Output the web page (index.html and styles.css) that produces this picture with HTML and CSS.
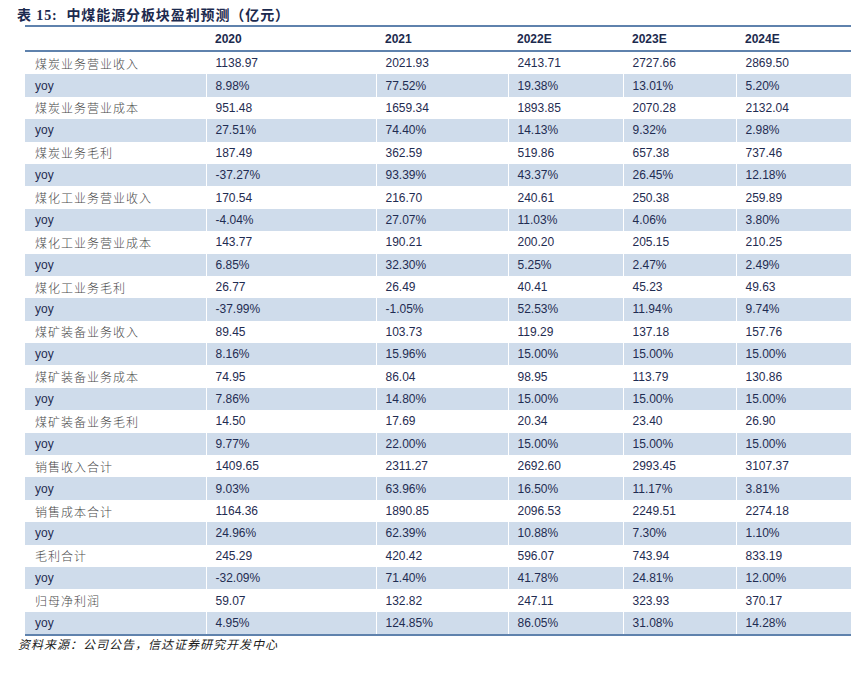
FILE: index.html
```html
<!DOCTYPE html>
<html lang="zh">
<head>
<meta charset="utf-8">
<link rel="stylesheet" href="styles.css">
</head>
<body>
<div class="title">表 15:&nbsp; 中煤能源分板块盈利预测（亿元）</div>
<table class="tbl">
<colgroup>
<col class="c0"><col class="c1"><col class="c2"><col class="c3"><col class="c4"><col class="c5">
</colgroup>
<thead>
<tr><th></th><th>2020</th><th>2021</th><th>2022E</th><th>2023E</th><th>2024E</th></tr>
</thead>
<tbody>
<tr><td class="lab">煤炭业务营业收入</td><td>1138.97</td><td>2021.93</td><td>2413.71</td><td>2727.66</td><td>2869.50</td></tr>
<tr class="alt"><td>yoy</td><td>8.98%</td><td>77.52%</td><td>19.38%</td><td>13.01%</td><td>5.20%</td></tr>
<tr><td class="lab">煤炭业务营业成本</td><td>951.48</td><td>1659.34</td><td>1893.85</td><td>2070.28</td><td>2132.04</td></tr>
<tr class="alt"><td>yoy</td><td>27.51%</td><td>74.40%</td><td>14.13%</td><td>9.32%</td><td>2.98%</td></tr>
<tr><td class="lab">煤炭业务毛利</td><td>187.49</td><td>362.59</td><td>519.86</td><td>657.38</td><td>737.46</td></tr>
<tr class="alt"><td>yoy</td><td>-37.27%</td><td>93.39%</td><td>43.37%</td><td>26.45%</td><td>12.18%</td></tr>
<tr><td class="lab">煤化工业务营业收入</td><td>170.54</td><td>216.70</td><td>240.61</td><td>250.38</td><td>259.89</td></tr>
<tr class="alt"><td>yoy</td><td>-4.04%</td><td>27.07%</td><td>11.03%</td><td>4.06%</td><td>3.80%</td></tr>
<tr><td class="lab">煤化工业务营业成本</td><td>143.77</td><td>190.21</td><td>200.20</td><td>205.15</td><td>210.25</td></tr>
<tr class="alt"><td>yoy</td><td>6.85%</td><td>32.30%</td><td>5.25%</td><td>2.47%</td><td>2.49%</td></tr>
<tr><td class="lab">煤化工业务毛利</td><td>26.77</td><td>26.49</td><td>40.41</td><td>45.23</td><td>49.63</td></tr>
<tr class="alt"><td>yoy</td><td>-37.99%</td><td>-1.05%</td><td>52.53%</td><td>11.94%</td><td>9.74%</td></tr>
<tr><td class="lab">煤矿装备业务收入</td><td>89.45</td><td>103.73</td><td>119.29</td><td>137.18</td><td>157.76</td></tr>
<tr class="alt"><td>yoy</td><td>8.16%</td><td>15.96%</td><td>15.00%</td><td>15.00%</td><td>15.00%</td></tr>
<tr><td class="lab">煤矿装备业务成本</td><td>74.95</td><td>86.04</td><td>98.95</td><td>113.79</td><td>130.86</td></tr>
<tr class="alt"><td>yoy</td><td>7.86%</td><td>14.80%</td><td>15.00%</td><td>15.00%</td><td>15.00%</td></tr>
<tr><td class="lab">煤矿装备业务毛利</td><td>14.50</td><td>17.69</td><td>20.34</td><td>23.40</td><td>26.90</td></tr>
<tr class="alt"><td>yoy</td><td>9.77%</td><td>22.00%</td><td>15.00%</td><td>15.00%</td><td>15.00%</td></tr>
<tr><td class="lab">销售收入合计</td><td>1409.65</td><td>2311.27</td><td>2692.60</td><td>2993.45</td><td>3107.37</td></tr>
<tr class="alt"><td>yoy</td><td>9.03%</td><td>63.96%</td><td>16.50%</td><td>11.17%</td><td>3.81%</td></tr>
<tr><td class="lab">销售成本合计</td><td>1164.36</td><td>1890.85</td><td>2096.53</td><td>2249.51</td><td>2274.18</td></tr>
<tr class="alt"><td>yoy</td><td>24.96%</td><td>62.39%</td><td>10.88%</td><td>7.30%</td><td>1.10%</td></tr>
<tr><td class="lab">毛利合计</td><td>245.29</td><td>420.42</td><td>596.07</td><td>743.94</td><td>833.19</td></tr>
<tr class="alt"><td>yoy</td><td>-32.09%</td><td>71.40%</td><td>41.78%</td><td>24.81%</td><td>12.00%</td></tr>
<tr><td class="lab">归母净利润</td><td>59.07</td><td>132.82</td><td>247.11</td><td>323.93</td><td>370.17</td></tr>
<tr class="alt last"><td>yoy</td><td>4.95%</td><td>124.85%</td><td>86.05%</td><td>31.08%</td><td>14.28%</td></tr>
</tbody>
</table>
<div class="source">资料来源：公司公告，信达证券研究开发中心</div>
</body>
</html>
```
FILE: styles.css
```css
html, body {
  margin: 0;
  padding: 0;
  background: #ffffff;
}
body {
  width: 859px;
  height: 673px;
  font-family: "Liberation Sans", Arial, "Noto Sans CJK SC", sans-serif;
}
.title {
  height: 25px;
  line-height: 31px;
  padding-left: 17px;
  font-family: "Liberation Serif", "Noto Sans CJK SC", serif;
  font-weight: bold;
  font-size: 14px;
  letter-spacing: 0.9px;
  color: #1c2a4e;
  white-space: nowrap;
}
.tbl {
  margin-left: 25px;
  width: 826px;
  border-collapse: collapse;
  table-layout: fixed;
  border-top: 2px solid #5f82ad;
}
.c0 { width: 181px; }
.c1 { width: 170px; }
.c2 { width: 132px; }
.c3 { width: 115px; }
.c4 { width: 113px; }
.c5 { width: 115px; }
.tbl th {
  height: 22px;
  padding: 1px 0 0 9px;
  text-align: left;
  font-size: 12px;
  font-weight: bold;
  color: #1c2a4e;
  border-bottom: 2px solid #5f82ad;
}
.tbl td {
  height: 22.4px;
  padding: 0 0 0 9px;
  font-size: 12px;
  color: #1f2c52;
  white-space: nowrap;
  border-left: 1px solid #ffffff;
}
.tbl td:first-child {
  padding-left: 10px;
  border-left: none;
}
.tbl td.lab {
  font-family: "Noto Sans CJK SC", sans-serif;
  font-size: 12px;
  letter-spacing: 1px;
  color: #4a4a4a;
  font-weight: 300;
}
.tbl tr.alt td {
  background: #cfdceb;
}
.tbl tr.last td {
  border-bottom: 2px solid #5f82ad;
}
.source {
  padding-left: 18px;
  padding-top: 0;
  font-family: "Noto Sans CJK SC", sans-serif;
  font-style: italic;
  font-size: 12px;
  letter-spacing: 1px;
  line-height: 16px;
  color: #1a1a1a;
  white-space: nowrap;
}
```
